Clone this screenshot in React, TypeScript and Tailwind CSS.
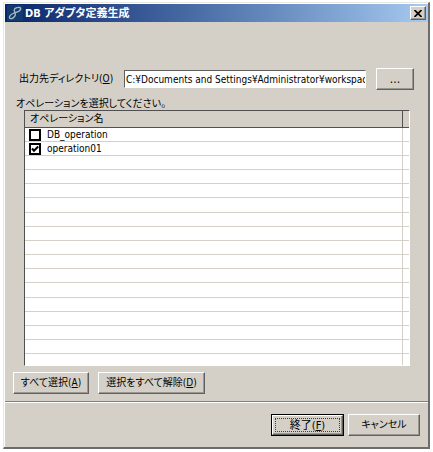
import React, { useState } from "react";
import clsx from "clsx";

interface Operation {
  name: string;
  checked: boolean;
}

interface ButtonProps {
  children: React.ReactNode;
  className?: string;
}

const initialOperations: Operation[] = [
  { name: "DB_operation", checked: false },
  { name: "operation01", checked: true },
];

const EMPTY_ROWS = 14;

const raised =
  "border border-t-white border-l-white border-r-[#606060] border-b-[#606060] shadow-[inset_-1px_-1px_0_#9a9893]";

const Button = ({ children, className }: ButtonProps) => (
  <button
    type="button"
    className={clsx(
      "flex items-center justify-center whitespace-nowrap bg-[#d4d0c8] leading-none",
      raised,
      className
    )}
  >
    {children}
  </button>
);

const TitleBar = () => (
  <header className="flex h-[18px] items-center bg-linear-to-r from-[#0a246a] to-[#a6caf0] pr-[2px] pl-[2px]">
    <svg viewBox="0 0 16 16" className="h-4 w-4 shrink-0" fill="none">
      <rect width="16" height="16" fill="#123a6c" />
      <path
        d="M12.500 2.500C10.500 2 7.500 3.200 7.200 5 7 6.500 8.800 7.500 8.300 10 7.800 12.300 4.800 14.300 3 13.500 1.500 12.700 3 9.800 6 8.500 9 7.300 12.500 7 13.500 4.500 14 3.300 13.500 2.700 12.500 2.500Z"
        stroke="#a9b9c4"
        strokeWidth="1.300"
      />
    </svg>
    <h1 className="ml-[2px] flex-1 text-[11px] leading-none font-bold whitespace-nowrap text-white">
      DB アダプタ定義生成
    </h1>
    <button
      type="button"
      aria-label="閉じる"
      className={clsx(
        "flex h-[14px] w-[16px] items-center justify-center bg-[#d4d0c8]",
        raised
      )}
    >
      <svg viewBox="0 0 8 7" className="h-[7px] w-2">
        <path d="M.5 0 7.500 7M7.500 0 .5 7" stroke="#000" strokeWidth="1.700" />
      </svg>
    </button>
  </header>
);

export default function App() {
  const [operations, setOperations] = useState(initialOperations);
  const [directory, setDirectory] = useState(
    "C:¥Documents and Settings¥Administrator¥workspace"
  );

  const toggle = (name: string) => {
    setOperations(
      operations.map((op) =>
        op.name === name ? { ...op, checked: !op.checked } : op
      )
    );
  };

  return (
    <div className="bg-white px-[3px] pt-[2px] pb-[3px] font-['DejaVu_Sans_Condensed','DejaVu_Sans','Noto_Sans_CJK_JP',sans-serif] text-[10px] text-black [font-feature-settings:'palt']">
      <main className="border-t border-r-2 border-b-2 border-l border-t-[#e8e6e0] border-r-[#6c6c6c] border-b-[#6c6c6c] border-l-[#e8e6e0] bg-[#d4d0c8]">
        <div className="border-t border-l border-white">
          <TitleBar />

          <div className="flex items-center pt-[46px] pr-[14px] pl-[14px]">
            <label htmlFor="directory" className="w-[105px] leading-none whitespace-nowrap">
              出力先ディレクトリ(<u>O</u>)
            </label>
            <input
              id="directory"
              type="text"
              value={directory}
              onChange={(e) => setDirectory(e.target.value)}
              className="h-[18px] min-w-0 flex-1 border border-t-[#606060] border-r-white border-b-white border-l-[#606060] bg-white pl-px leading-none outline-none"
            />
            <Button className="ml-[10px] h-[22px] w-[38px] text-[12px]">...</Button>
          </div>

          <p className="mt-[7px] ml-[11px] leading-[13px]">
            オペレーションを選択してください。
          </p>

          <div className="mr-[18px] ml-[19px] border border-t-[#505050] border-r-white border-b-white border-l-[#505050] bg-white">
            <table className="h-[254px] w-full table-fixed border-collapse">
              <thead>
                <tr className="h-[16px] border-b border-[#505050] bg-[#d4d0c8]">
                  <th className="border-r border-[#505050] py-0 pl-[5px] text-left leading-[14px] font-normal">
                    オペレーション名
                  </th>
                  <th className="w-[7px] p-0" />
                </tr>
              </thead>
              <tbody>
                {operations.map((op) => (
                  <tr key={op.name} className="h-[14px] border-b border-[#d4d0c8]">
                    <td className="border-r border-[#d4d0c8] p-0">
                      <label className="flex h-[13px] items-center pt-px pl-[4px] leading-none">
                        <span className="relative flex h-3 w-3">
                          <input
                            type="checkbox"
                            checked={op.checked}
                            onChange={() => toggle(op.name)}
                            className="h-3 w-3 appearance-none border-2 border-black bg-white"
                          />
                          {op.checked && (
                            <svg
                              viewBox="0 0 12 12"
                              className="pointer-events-none absolute inset-0 h-3 w-3"
                              fill="none"
                            >
                              <path d="M3 5.500 5 7.700 9.200 3.500" stroke="#000" strokeWidth="2" />
                            </svg>
                          )}
                        </span>
                        <span className="ml-[6px]">{op.name}</span>
                      </label>
                    </td>
                    <td className="p-0" />
                  </tr>
                ))}
                {Array.from({ length: EMPTY_ROWS }, (_, i) => (
                  <tr key={i} className="h-[14px] border-b border-[#d4d0c8]">
                    <td className="border-r border-[#d4d0c8] p-0" />
                    <td className="p-0" />
                  </tr>
                ))}
                <tr className="h-[11px]">
                  <td className="border-r border-[#d4d0c8] p-0" />
                  <td className="p-0" />
                </tr>
              </tbody>
            </table>
          </div>

          <div className="mt-[6px] ml-2 flex gap-[9px]">
            <Button className="h-[22px] w-[76px]">
              すべて選択(<u>A</u>)
            </Button>
            <Button className="h-[22px] w-[107px]">
              選択をすべて解除(<u>D</u>)
            </Button>
          </div>

          <footer className="mt-[7px] flex justify-end gap-1 border-t border-[#808080] pt-[12px] pr-2 pb-[11px] shadow-[inset_0_1px_0_#ffffff]">
            <div className="border border-black">
              <Button className="h-[20px] w-[71px] p-[2px]">
                <span className="flex h-full w-full items-center justify-center border border-dotted border-[#404040] text-[11px]">
                  終了(<u>F</u>)
                </span>
              </Button>
            </div>
            <Button className="h-[22px] w-[72px]">キャンセル</Button>
          </footer>
        </div>
      </main>
    </div>
  );
}
